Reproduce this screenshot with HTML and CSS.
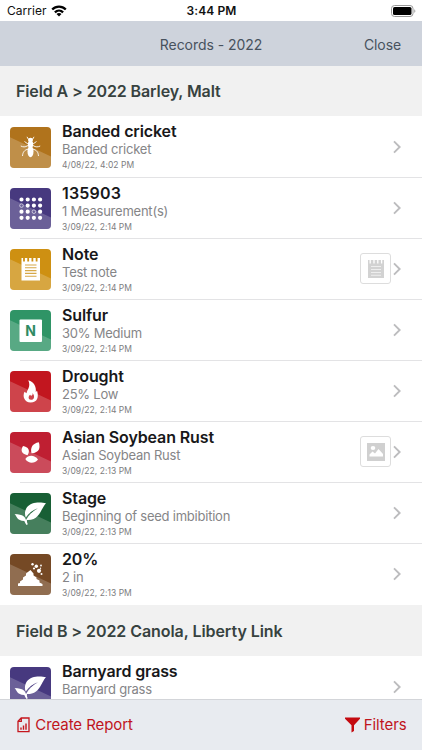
FILE: index.html
```html
<!DOCTYPE html>
<html lang="en">
<head>
<meta charset="utf-8">
<title>Records - 2022</title>
<link rel="stylesheet" href="styles.css">
</head>
<body>
<svg class="defs" width="0" height="0" aria-hidden="true">
  <symbol id="shade" viewBox="0 0 41 41"><path d="M0 10.300L41 29.500V41H0Z" fill="#fff" fill-opacity=".2"/></symbol>
  <symbol id="chevron" viewBox="0 0 8 14"><path d="M1 1.300L6.700 7L1 12.700" fill="none" stroke="#bcbcbe" stroke-width="1.900"/></symbol>
  <symbol id="leaf" viewBox="0 0 41 41">
    <path d="M36 10.200C31 9 21 8.300 16.800 14.500C14.500 18 14.600 22 15.800 24.500C19 20 23 17 28 15.300C23 18 18.500 22 16 27C15.200 24 13.500 21.500 4.500 21C7 23 6.500 27.800 14.300 28C15 29.500 15.700 31 16.500 32L17.800 31.300C17 29.800 16.700 28.500 17 27C30 27.500 30.500 16 36 10.200Z" fill="#fff"/>
  </symbol>
</svg>
<div class="screen">
  <div class="status">
    <div class="carrier">Carrier
      <svg width="16" height="12" viewBox="0 0 16 12"><g fill="none" stroke="#000" stroke-width="2.300"><path d="M1.200 4.500C5 .7 11 .7 14.800 4.500"/><path d="M3.900 7.300C6.200 5.100 9.800 5.100 12.100 7.300"/></g><path d="M5.500 8.900C7 7.700 9 7.700 10.500 8.900L8 11.500Z"/></svg>
    </div>
    <div class="time">3:44 PM</div>
    <svg class="battery" width="25" height="12" viewBox="0 0 25 12"><rect x=".5" y=".5" width="21.500" height="11" rx="3" fill="none" stroke="#999"/><rect x="2" y="2" width="18.500" height="8" rx="1.600"/><path d="M23.300 4.200V7.800C24.700 7.300 24.700 4.700 23.300 4.200Z" fill="#999"/></svg>
  </div>
  <header class="nav"><span class="nav-title">Records - 2022</span><span class="close">Close</span></header>
  <main class="list">
    <h2 class="section section-a">Field A &gt; 2022 Barley, Malt</h2>
    <div class="rows">
      <div class="row">
        <svg class="icon cricket" viewBox="0 0 41 41"><use href="#shade"/><g fill="none" stroke="#fff" stroke-width=".9"><path d="M18.500 12.500L17 9.800M22.500 12.500L24 9.800M18 17L14.500 14.500M23 17L26.500 14.500M18 18.500C15 20.500 13 20 10.800 19M23 18.500C26 20.500 28 20 30.200 19M18.500 22C14 23 12.800 25.500 12.500 29M22.500 22C27 23 28.200 25.500 28.500 29"/></g><ellipse cx="20.500" cy="13" rx="2.500" ry="2.200" fill="#fff"/><rect x="18" y="14.200" width="5" height="6" rx="1.500" fill="#fff"/><ellipse cx="20.500" cy="24.500" rx="3" ry="5.800" fill="#fff"/></svg>
        <div class="text"><div class="title">Banded cricket</div><div class="sub">Banded cricket</div><div class="date">4/08/22, 4:02 PM</div></div>
        <svg class="chevron"><use href="#chevron"/></svg>
      </div>
      <div class="row">
        <svg class="icon measure" viewBox="0 0 41 41"><use href="#shade"/><g fill="none" stroke="#fff" stroke-width="4.200" stroke-linecap="round"><path d="M11.500 11.500h19" stroke-dasharray="0 6.200"/><path d="M17.700 17.600h13" stroke-dasharray="0 6.200"/><path d="M11.500 23.700h7" stroke-dasharray="0 6.200"/><path d="M30.100 23.700h0"/><path d="M11.500 29.800h19" stroke-dasharray="0 6.200"/></g><g fill="none" stroke="#fff" stroke-opacity=".75" stroke-width=".8"><circle cx="11.500" cy="17.600" r="1.800"/><circle cx="23.900" cy="23.700" r="1.800"/></g></svg>
        <div class="text"><div class="title digits">135903</div><div class="sub">1 Measurement(s)</div><div class="date">3/09/22, 2:14 PM</div></div>
        <svg class="chevron"><use href="#chevron"/></svg>
      </div>
      <div class="row">
        <svg class="icon note" viewBox="0 0 41 41"><use href="#shade"/><path d="M11.500 9H30V31.500H11.500Z" fill="#fff"/><path d="M14 9v3.500M18.200 9v3.500M22.400 9v3.500M26.600 9v3.500" stroke="#ce9012" stroke-width="1.800"/><path d="M15 16h11.500M15 18.800h11.500M15 21.600h11.500M15 24.400h11.500M15 27.200h11.500" stroke="#d6a848" stroke-width="1.100"/></svg>
        <div class="text"><div class="title">Note</div><div class="sub">Test note</div><div class="date">3/09/22, 2:14 PM</div></div>
        <span class="thumb"><svg width="18" height="20" viewBox="0 0 18 20"><path d="M1 1H17V19H1Z" fill="#d2d2d2"/><path d="M3.200 1v3.500M7 1v3.500M10.800 1v3.500M14.600 1v3.500" stroke="#fff" stroke-width="1.300"/><path d="M4 7.500h10M4 10.500h10M4 13.500h10M4 16.300h10" stroke="#eee" stroke-width="1"/></svg></span>
        <svg class="chevron"><use href="#chevron"/></svg>
      </div>
      <div class="row">
        <svg class="icon sulfur" viewBox="0 0 41 41"><use href="#shade"/><rect x="9.500" y="9.500" width="22.500" height="22.500" rx="1" fill="#fff"/><text class="letter" x="20.700" y="25.700" text-anchor="middle">N</text></svg>
        <div class="text"><div class="title">Sulfur</div><div class="sub">30% Medium</div><div class="date">3/09/22, 2:14 PM</div></div>
        <svg class="chevron"><use href="#chevron"/></svg>
      </div>
      <div class="row">
        <svg class="icon drought" viewBox="0 0 41 41"><use href="#shade"/><path fill-rule="evenodd" d="M18.300 9.200C24 11 26.500 15.500 25.800 21.200L27 19.500C29 26 27.500 31.500 20.600 31.500C14.500 31.500 12.200 25.500 14.500 20.800L16.500 22.300C17.500 18 21 15.500 18.300 9.200ZM22.600 22C23 25 20.500 25.500 20.300 23.700C18 25 18 28.600 21 28.800C24.500 28.800 25 25 22.600 22Z" fill="#fff"/></svg>
        <div class="text"><div class="title">Drought</div><div class="sub">25% Low</div><div class="date">3/09/22, 2:14 PM</div></div>
        <svg class="chevron"><use href="#chevron"/></svg>
      </div>
      <div class="row">
        <svg class="icon rust" viewBox="0 0 41 41"><use href="#shade"/><g fill="#fff"><path d="M13 14C18.500 15 20.500 18.500 17.500 23.200C11 21.800 10.500 18 13 14Z"/><path d="M28.800 10.200C30.500 16 29.500 20.500 21.500 21.300C20 15.500 22.500 11.500 28.800 10.200Z"/><path d="M15.300 27C18.500 22.600 24.500 22.800 28 27.500C24.500 32 18.500 32 15.300 27Z"/></g></svg>
        <div class="text"><div class="title">Asian Soybean Rust</div><div class="sub">Asian Soybean Rust</div><div class="date">3/09/22, 2:13 PM</div></div>
        <span class="thumb"><svg width="20" height="20" viewBox="0 0 20 20"><path d="M1 1H19V19H1Z" fill="#d0d0d0"/><ellipse cx="7" cy="6" rx="2.300" ry="1.900" fill="#fff"/><path d="M3.500 14.500V12.500L6.500 9.500L9 11.500L12.500 7L17 12V14.500Z" fill="#fff"/></svg></span>
        <svg class="chevron"><use href="#chevron"/></svg>
      </div>
      <div class="row">
        <svg class="icon stage" viewBox="0 0 41 41"><use href="#shade"/><use href="#leaf"/></svg>
        <div class="text"><div class="title">Stage</div><div class="sub">Beginning of seed imbibition</div><div class="date">3/09/22, 2:13 PM</div></div>
        <svg class="chevron"><use href="#chevron"/></svg>
      </div>
      <div class="row">
        <svg class="icon soil" viewBox="0 0 41 41"><use href="#shade"/><g fill="#fff"><path d="M8 32V29.500L10 29V27.500L13 25.500V23.500L16 21.500V19.500L20.500 16L23.500 19.500V21.500L26.500 23.500V25L29.500 26.500V28.500L32.500 30V32Z"/><circle cx="22.500" cy="10.200" r="1.200"/><circle cx="26.300" cy="12.200" r="1.700"/><circle cx="31" cy="11.500" r=".9"/><circle cx="29" cy="16.800" r="2.100"/><circle cx="24" cy="14.500" r="1.100"/><circle cx="31.500" cy="20" r="1"/><circle cx="30.500" cy="14.200" r=".7"/></g></svg>
        <div class="text"><div class="title">20%</div><div class="sub">2 in</div><div class="date">3/09/22, 2:13 PM</div></div>
        <svg class="chevron"><use href="#chevron"/></svg>
      </div>
    </div>
    <h2 class="section section-b">Field B &gt; 2022 Canola, Liberty Link</h2>
    <div class="rows">
      <div class="row">
        <svg class="icon measure" viewBox="0 0 41 41"><use href="#shade"/><use href="#leaf"/></svg>
        <div class="text"><div class="title">Barnyard grass</div><div class="sub">Barnyard grass</div></div>
        <svg class="chevron"><use href="#chevron"/></svg>
      </div>
    </div>
  </main>
  <footer class="toolbar">
    <span class="action"><svg width="13" height="16" viewBox="0 0 13 16"><path d="M4.200 1H12V14.600H1V4.200ZM4.300 1V4.400H1" fill="none" stroke="#c5161d" stroke-width="1.300"/><path d="M4 12.800V10.500M6.500 12.800V8.500M9 12.800V6.500" stroke="#c5161d" stroke-width="1.400"/></svg><span class="create">Create Report</span></span>
    <span class="action filter-action"><svg width="15" height="16" viewBox="0 0 15 16"><path d="M0 .5H15V1.800L9 8.300V14L6.500 15.500V8.300L0 1.800Z" fill="#c40a10"/></svg><span class="filters">Filters</span></span>
  </footer>
</div>
</body>
</html>
```
FILE: styles.css
```css
* { box-sizing: border-box; }
body { margin: 0; font-family: Inter, "Liberation Sans", sans-serif; background: #fff; }
.defs { position: absolute; }
.screen { width: 422px; height: 750px; display: flex; flex-direction: column; overflow: hidden; }
.screen svg { display: block; flex: none; }

.status { height: 21px; flex: none; display: grid; grid-template-columns: 1fr auto 1fr; align-items: center; padding: 0 6px 0 7px; font-size: 12px; line-height: 21px; color: #111; }
.carrier { display: flex; align-items: center; gap: 4px; letter-spacing: .05px; }
.time { font-weight: 600; letter-spacing: .1px; }
.battery { justify-self: end; }

.nav { height: 44.500px; flex: none; display: grid; grid-template-columns: 1fr auto 1fr; align-items: center; padding: 2px 21px 0; background: #ced3dc; color: #48525e; font-size: 14px; }
.nav-title { grid-column: 2; letter-spacing: -.05px; }
.close { justify-self: end; letter-spacing: -.1px; }

.list { flex: 1; min-height: 0; overflow: hidden; }
.section { margin: 0; padding-left: 16px; background: #f1f1f1; color: #37423f; font-size: 16px; font-weight: 600; letter-spacing: -.11px; }
.section-a { height: 50.500px; line-height: 51px; }
.section-b { height: 51px; line-height: 52px; margin-top: 1px; letter-spacing: -.06px; }

.row { height: 61px; display: flex; align-items: flex-start; padding: 10.700px 21px 0 10.300px; background: linear-gradient(#e3e3e5, #e3e3e5) 20px 0 / 402px 1px no-repeat; }
.row:first-child { background: none; }
.icon { width: 41px; height: 41px; border-radius: 4px; margin-right: 10.700px; }
.text { flex: 1; margin-top: -4.700px; white-space: nowrap; }
.row:first-child .text { margin-top: -5.700px; }
.title { font-size: 16px; line-height: 20px; font-weight: 600; color: #18181a; letter-spacing: -.12px; }
.digits { letter-spacing: .2px; }
.sub { font-size: 13px; line-height: 17px; color: #858587; letter-spacing: -.23px; }
.date { font-size: 8.500px; line-height: 14px; color: #7d7d80; letter-spacing: .05px; }
.chevron { width: 8px; height: 14px; margin-top: 13.300px; }
.thumb { width: 31px; height: 31px; margin: 4.500px 2px 0 0; border: 1.500px solid #ddd; border-radius: 3px; display: flex; align-items: center; justify-content: center; background: #fff; }

.cricket { background: #b0731c; }
.measure { background: #47397f; }
.note { background: #ce9012; }
.sulfur { background: #2f9466; }
.drought { background: #c2161f; }
.rust { background: #bf1f32; }
.stage { background: #185f35; }
.soil { background: #754925; }
.letter { font-size: 14px; font-weight: 700; fill: #2f8a63; }

.toolbar { height: 51.500px; flex: none; display: flex; justify-content: space-between; align-items: center; padding: 0 15.500px 0 17.300px; background: #e8ebf0; border-top: 1px solid #d3d5d9; color: #c0141c; font-size: 15px; }
.create { letter-spacing: -.08px; }
.filters { letter-spacing: -.1px; }
.action { display: flex; align-items: center; gap: 5px; }
.filter-action { gap: 4px; }
```
